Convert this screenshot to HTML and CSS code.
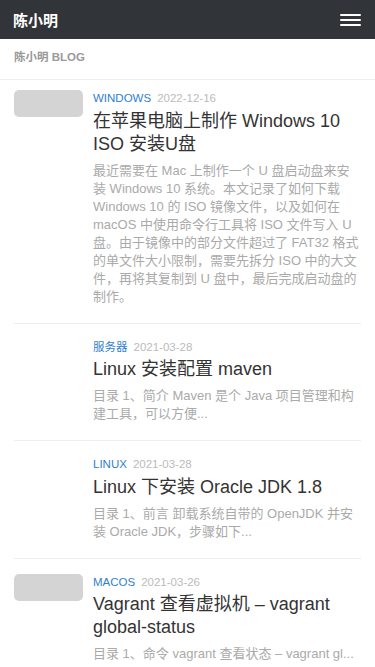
FILE: index.html
```html
<!DOCTYPE html>
<html lang="zh-CN">
<head>
    <meta charset="UTF-8">
    <meta name="viewport" content="width=device-width, initial-scale=1.0">
    <title>陈小明 BLOG</title>
    <link rel="stylesheet" href="styles.css">
</head>
<body>
    <header class="site-header">
        <a class="brand" href="#">陈小明</a>
        <button class="menu-toggle" type="button" aria-label="菜单">
            <span></span>
            <span></span>
            <span></span>
        </button>
    </header>

    <div class="blog-title">陈小明 BLOG</div>

    <main class="post-list">
        <article class="post">
            <div class="post-thumb"></div>
            <div class="post-body">
                <div class="post-meta">
                    <a class="post-cat" href="#">Windows</a>
                    <span class="post-date">2022-12-16</span>
                </div>
                <h2 class="post-title">在苹果电脑上制作 Windows 10 ISO 安装U盘</h2>
                <p class="post-excerpt">最近需要在 Mac 上制作一个 U 盘启动盘来安装 Windows 10 系统。本文记录了如何下载 Windows 10 的 ISO 镜像文件，以及如何在 macOS 中使用命令行工具将 ISO 文件写入 U 盘。由于镜像中的部分文件超过了 FAT32 格式的单文件大小限制，需要先拆分 ISO 中的大文件，再将其复制到 U 盘中，最后完成启动盘的制作。</p>
            </div>
        </article>

        <article class="post">
            <div class="post-thumb empty"></div>
            <div class="post-body">
                <div class="post-meta">
                    <a class="post-cat" href="#">服务器</a>
                    <span class="post-date">2021-03-28</span>
                </div>
                <h2 class="post-title">Linux 安装配置 maven</h2>
                <p class="post-excerpt">目录 1、简介 Maven 是个 Java 项目管理和构建工具，可以方便...</p>
            </div>
        </article>

        <article class="post">
            <div class="post-thumb empty"></div>
            <div class="post-body">
                <div class="post-meta">
                    <a class="post-cat" href="#">Linux</a>
                    <span class="post-date">2021-03-28</span>
                </div>
                <h2 class="post-title">Linux 下安装 Oracle JDK 1.8</h2>
                <p class="post-excerpt">目录 1、前言 卸载系统自带的 OpenJDK 并安装 Oracle JDK，步骤如下...</p>
            </div>
        </article>

        <article class="post">
            <div class="post-thumb"></div>
            <div class="post-body">
                <div class="post-meta">
                    <a class="post-cat" href="#">macOS</a>
                    <span class="post-date">2021-03-26</span>
                </div>
                <h2 class="post-title">Vagrant 查看虚拟机 – vagrant global-status</h2>
                <p class="post-excerpt">目录 1、命令 vagrant 查看状态 – vagrant gl...</p>
            </div>
        </article>
    </main>
</body>
</html>
```

FILE: styles.css
```css
body {
    margin: 0;
    background: #fff;
    font-family: "Liberation Sans", Arial, "Noto Sans CJK SC", sans-serif;
    color: #333;
}

a {
    text-decoration: none;
}

.site-header {
    display: flex;
    justify-content: space-between;
    align-items: center;
    height: 39px;
    padding: 0 14px 0 13px;
    background: #313438;
}

.brand {
    color: #fff;
    font-size: 15px;
    font-weight: bold;
}

.menu-toggle {
    display: flex;
    flex-direction: column;
    justify-content: space-between;
    width: 21px;
    height: 12px;
    padding: 0;
    border: none;
    background: none;
    cursor: pointer;
}

.menu-toggle span {
    display: block;
    height: 2px;
    border-radius: 1px;
    background: #fff;
}

.blog-title {
    padding: 10px 14px 14px;
    line-height: 16px;
    font-size: 11.5px;
    font-weight: bold;
    color: #999;
    border-bottom: 1px solid #eee;
}

.post-list {
    padding: 0 14px;
}

.post {
    display: flex;
    gap: 10px;
    padding: 15px 0 17px;
    border-bottom: 1px solid #eee;
}

.post:first-child {
    padding-top: 10px;
}

.post-thumb {
    flex: 0 0 69px;
    height: 27px;
    border-radius: 5px;
    background: #d4d4d4;
}

.post-thumb.empty {
    background: none;
}

.post-body {
    flex: 1;
    min-width: 0;
}

.post-meta {
    display: flex;
    gap: 6px;
    font-size: 11.5px;
    line-height: 16px;
}

.post-cat {
    color: #2f7fd0;
    text-transform: uppercase;
}

.post-date {
    color: #bbb;
}

.post-title {
    margin: 3.5px 0 6px;
    font-size: 18px;
    line-height: 23px;
    font-weight: normal;
    color: #333;
}

.post-excerpt {
    margin: 0;
    font-size: 13px;
    line-height: 18px;
    color: #aaa;
}
```
